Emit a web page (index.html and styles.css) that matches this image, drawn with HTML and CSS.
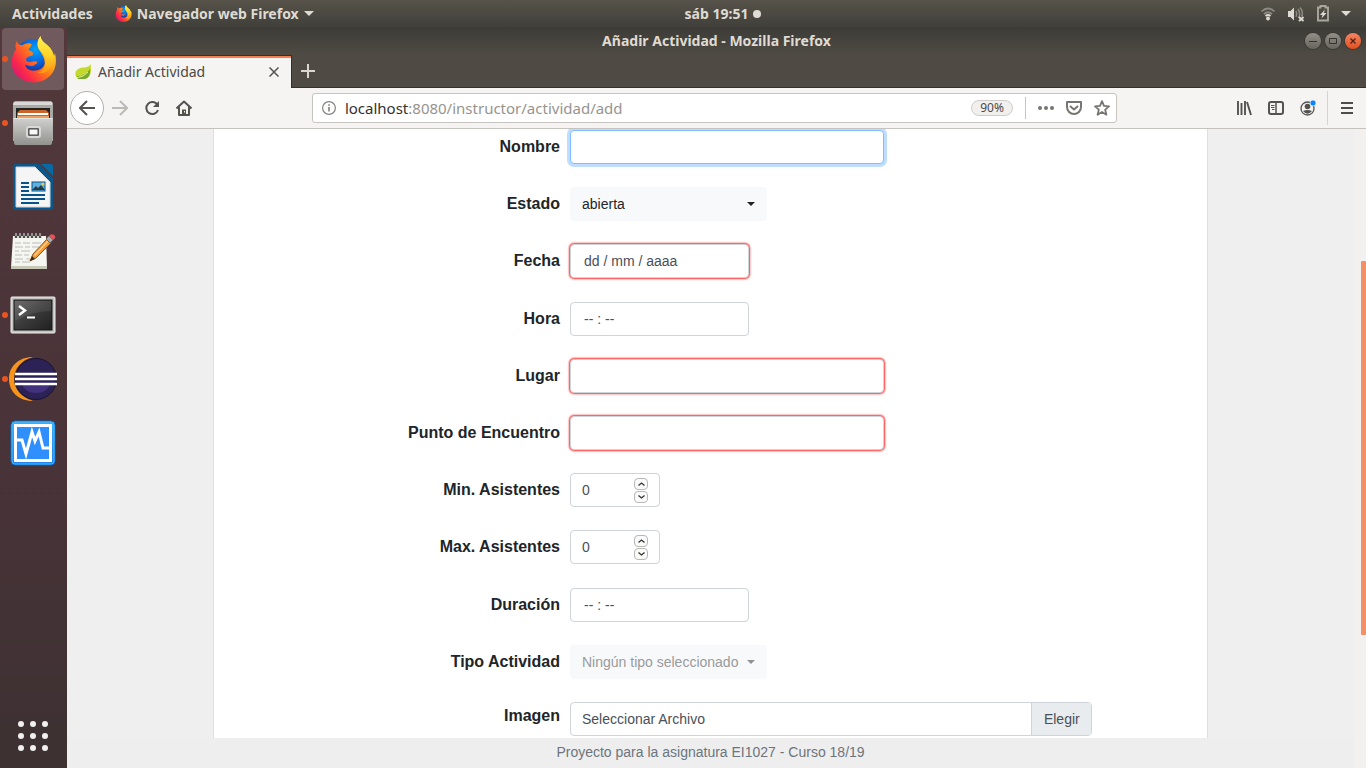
FILE: index.html
```html
<!DOCTYPE html>
<html lang="es">
<head>
<meta charset="utf-8">
<title>Añadir Actividad</title>
<link rel="stylesheet" href="styles.css">
</head>
<body>
<svg class="defs" aria-hidden="true">
  <defs>
    <linearGradient id="fox" x1="0" y1="0.85" x2="0.9" y2="0.1">
      <stop offset="0" stop-color="#d3127c"/><stop offset="0.25" stop-color="#fb2b48"/><stop offset="0.55" stop-color="#ff7a1a"/><stop offset="0.85" stop-color="#ffc81e"/><stop offset="1" stop-color="#fff04a"/>
    </linearGradient>
    <linearGradient id="flame" x1="0.4" y1="0" x2="0.4" y2="1">
      <stop offset="0" stop-color="#fff352"/><stop offset="0.5" stop-color="#ffd52a"/><stop offset="1" stop-color="#ff9412"/>
    </linearGradient>
    <radialGradient id="globe" cx="0.55" cy="0.3" r="0.65">
      <stop offset="0" stop-color="#00a5fb"/><stop offset="0.55" stop-color="#0a62dc"/><stop offset="1" stop-color="#25207c"/>
    </radialGradient>
    <linearGradient id="metal" x1="0" y1="0" x2="0" y2="1">
      <stop offset="0" stop-color="#d0d0ce"/><stop offset="1" stop-color="#92928f"/>
    </linearGradient>
    <linearGradient id="screen" x1="0" y1="0" x2="1" y2="1">
      <stop offset="0" stop-color="#626262"/><stop offset="0.5" stop-color="#3a3a3a"/><stop offset="1" stop-color="#202020"/>
    </linearGradient>
    <linearGradient id="blue" x1="0" y1="0" x2="0" y2="1">
      <stop offset="0" stop-color="#35b1f8"/><stop offset="1" stop-color="#1e83ee"/>
    </linearGradient>
    <symbol id="firefox" viewBox="0 0 44 46">
      <circle cx="22" cy="21" r="18" fill="url(#globe)"/>
      <path fill="url(#fox)" d="M6 5C4 8 4 11 5 13C-1 21-1 33 6 39C14 47 29 48 37 40C44 34 45 25 43 17L42 20C41 13 36 9 32 6C29 4 29 2 29 0C25 5 26 10 28 14C31 19 33 22 33 27C32 32 27 34 22 34C17 34 14 31 14 28C16 29 19 30 22 29C24 27 27 27 25 25C23 24 17 27 15 24C14 21 17 20 21 19C22 17 22 15 17 14C17 12 21 10 20 8C17 6 13 8 11 9C8 9 6 8 6 5Z"/>
      <path fill="url(#flame)" d="M29 0C25 5 25 10 28 14C32 19 35 22 33 29C32 33 29 35 26 36C35 38 41 32 42 20C41 13 36 9 32 6C30 4 29 2 29 0Z"/>
    </symbol>
  </defs>
</svg>

<header class="topbar">
  <div class="topbar-left">
    <button class="top-item">Actividades</button>
    <button class="top-item app-menu">
      <svg width="17" height="17"><use href="#firefox"/></svg>
      <span>Navegador web Firefox</span>
      <svg width="10" height="6" viewBox="0 0 10 6"><path d="M0 0h10L5 5z" fill="#dfdbd2"/></svg>
    </button>
  </div>
  <button class="top-item clock"><span>sáb 19:51</span><i class="clock-dot"></i></button>
  <div class="indicators">
    <svg width="16" height="16" viewBox="0 0 16 16" fill="none"><path d="M1.500 5.500Q8-.500 14.500 5.500M4 8q4-3.500 8 0" stroke="#8d8a84" stroke-width="1.700"/><path d="M5.500 10q2.500-2 5 0" stroke="#dfdbd2" stroke-width="1.700"/><circle cx="8" cy="12.500" r="1.900" fill="#dfdbd2"/></svg>
    <svg width="18" height="16" viewBox="0 0 18 16" fill="none"><path d="M1 5h2.500L7 1.500v13L3.500 11H1z" fill="#dfdbd2"/><path d="M9 5q1.500 3 0 6M11 3q3 5 .5 9M13 1.500q4 5 1.500 9" stroke="#8d8a84" stroke-width="1.500"/><path d="m12 11 4.500 4m0-4L12 15" stroke="#dfdbd2" stroke-width="1.800"/></svg>
    <svg width="14" height="17" viewBox="0 0 14 17"><path d="M4.500 2.500V1h5v1.500H12V15.500H2V2.500z" fill="none" stroke="#aaa79f" stroke-width="1.900"/><path d="M9 4.500 4 10h2.500L5.500 13.500 10.500 8H7.800z" fill="#dfdbd2"/></svg>
    <svg width="10" height="6" viewBox="0 0 10 6"><path d="M0 0h10L5 5z" fill="#dfdbd2"/></svg>
  </div>
</header>

<div class="desktop">
  <nav class="dock" aria-label="Aplicaciones">
    <button class="dock-item active running" aria-label="Firefox">
      <svg width="45" height="47"><use href="#firefox"/></svg>
    </button>
    <button class="dock-item running" aria-label="Archivos">
      <svg width="44" height="46" viewBox="0 0 44 46">
        <path d="M2 3 4 1h36l2 2v38H2z" fill="#a9a9a6"/><path d="M3 2h38v3H2z" fill="#d9d9d7"/>
        <path d="M5 8h34v14H5z" fill="#252320"/><path d="M6 13 9 10h26l3 3v7H6z" fill="#c9652a"/><path d="M7 13h30v2H7z" fill="#fff"/><path d="M6 16h32v4H6z" fill="#eda15d"/>
        <path d="M2 18h40l-1 25q0 2-2 2H5q-2 0-2-2z" fill="url(#metal)"/><path d="M3 18.500h38" stroke="#e4e4e2"/>
        <rect x="16" y="27" width="13" height="10" rx="2" fill="#777" stroke="#d8d8d6" stroke-width="2"/><rect x="18" y="29" width="9" height="6" fill="#f8f8f8" stroke="#444"/>
      </svg>
    </button>
    <button class="dock-item" aria-label="LibreOffice Writer">
      <svg width="42" height="48" viewBox="0 0 42 48">
        <path d="M3 1h24l14 14v30q0 2-2 2H3q-2 0-2-2V3q0-2 2-2z" fill="#0b568b"/>
        <path d="M4 4h19l15 15v25H4z" fill="#f5f5f5" stroke="#cfd3d6"/>
        <path d="M29 1h10q2 0 2 2v10z" fill="#0869a3"/>
        <path d="M9 20h8M9 24h8M9 28h8M9 32h24M9 36h24M9 40h18" stroke="#08548a" stroke-width="2"/>
        <rect x="20" y="19" width="13" height="9" fill="#5eb1e1" stroke="#08548a"/><path d="m20 27 4-4 2 2 3-3 4 5z" fill="#263b40"/><circle cx="31" cy="21" r="1.500" fill="#efc84a"/>
      </svg>
    </button>
    <button class="dock-item" aria-label="Editor de textos">
      <svg width="46" height="40" viewBox="0 0 46 40">
        <path d="M3 5h33l1 32H1z" fill="#f6f6f1"/><path d="M1 35h36v3H1z" fill="#c7c8b5"/>
        <path d="M5 12h6m2 0h7m2 0h9M5 16h8m2 0h5m2 0h7M5 20h4m2 0h9M5 24h7m2 0h5M5 28h8m3 0h4M5 31h5m2 0h8" stroke="#bbb"/>
        <path d="M6 3v4m4-4v4m4-4v4m4-4v4m4-4v4m4-4v4m4-4v4" stroke="#4c4c4c" stroke-width="2.400"/><path d="M6 2v3m4-3v3m4-3v3m4-3v3m4-3v3m4-3v3m4-3v3" stroke="#ddd"/>
        <path d="m20 30 3-7L37 8l4 4-15 15z" fill="#f49a36" stroke="#94551c"/><path d="m24 24 14-15 1 1-14 15z" fill="#ffd08b"/><path d="m20 30 2-5 3 3z" fill="#3a2c20"/>
        <path d="m36 8 3-3 4 4-3 3z" fill="#aaa" stroke="#666"/><path d="m39 5 1-1q3-2 5 1 1 2-2 4z" fill="#e1545b"/>
      </svg>
    </button>
    <button class="dock-item running" aria-label="Terminal">
      <svg width="46" height="38" viewBox="0 0 46 38">
        <rect x="1" y="1" width="44" height="36" rx="1" fill="#c4c4c4" stroke="#eee"/><rect x="4" y="4" width="38" height="30" fill="url(#screen)" stroke="#161616"/>
        <path d="M5 5h36v10Q22 15 5 25z" fill="#fff" opacity=".08"/>
        <path d="m9 10 6 4.500L9 19" fill="none" stroke="#fff" stroke-width="2.400"/><path d="M17 21.500h8" stroke="#fff" stroke-width="2"/>
      </svg>
    </button>
    <button class="dock-item running" aria-label="Eclipse">
      <svg width="48" height="44" viewBox="0 0 48 44">
        <path d="M24 0C10 0 0 9 0 22s10 22 24 22C12 40 5 32 5 22S12 3 24 0z" fill="#f7941e"/>
        <circle cx="27" cy="22" r="20.500" fill="#2c2255" stroke="#171335"/><path d="M12 26q4 10 15 10t15-10z" fill="#42317d"/>
        <path d="M6 17h42M6 22h42M6 27h42" stroke="#fff" stroke-width="2.300"/>
      </svg>
    </button>
    <button class="dock-item" aria-label="Monitor del sistema">
      <svg width="46" height="46" viewBox="0 0 46 46">
        <rect x="1" y="1" width="44" height="44" rx="4" fill="url(#blue)" stroke="#0962b7"/><rect x="2" y="2" width="42" height="42" rx="3" fill="none" stroke="#49b8ff"/>
        <rect x="5.500" y="5.500" width="35" height="35" fill="#308fff" stroke="#fff" stroke-width="3"/>
        <path d="M7 20h5l4 14 6-22 3 9 4-9 4 16h6" fill="none" stroke="#fff" stroke-width="3"/>
      </svg>
    </button>
    <button class="dock-item show-apps" aria-label="Mostrar aplicaciones">
      <svg width="30" height="30" viewBox="0 0 30 30" fill="#f2f1f0"><circle cx="3" cy="3" r="3"/><circle cx="15" cy="3" r="3"/><circle cx="27" cy="3" r="3"/><circle cx="3" cy="15" r="3"/><circle cx="15" cy="15" r="3"/><circle cx="27" cy="15" r="3"/><circle cx="3" cy="27" r="3"/><circle cx="15" cy="27" r="3"/><circle cx="27" cy="27" r="3"/></svg>
    </button>
  </nav>

  <main class="window">
    <div class="titlebar">
      <span class="window-title">Añadir Actividad - Mozilla Firefox</span>
      <div class="window-buttons">
        <button aria-label="Minimizar"><svg width="16" height="16" viewBox="0 0 16 16"><path d="M4 8.500h8" stroke="#35332f"/></svg></button>
        <button aria-label="Maximizar"><svg width="16" height="16" viewBox="0 0 16 16"><path d="M4.500 5.500h7v5h-7z" fill="none" stroke="#35332f"/></svg></button>
        <button class="close" aria-label="Cerrar"><svg width="16" height="16" viewBox="0 0 16 16"><path d="m5.500 5.500 5 5m0-5-5 5" stroke="#4c2317" stroke-width="1.300"/></svg></button>
      </div>
    </div>

    <div class="tabstrip">
      <div class="tab">
        <svg width="17" height="16" viewBox="0 0 17 16"><path d="M15.500 0Q18 14 9 15H3Q-1 12 1 7 4 3 10 3.500 14 3 15.500 0z" fill="#c4d92e"/><path d="M2 12q7 1 13-7 1 8-5 10H3z" fill="#76aa2a"/><path d="M1 14q8-1 12-6" stroke="#e9ef9f" fill="none"/></svg>
        <span>Añadir Actividad</span>
        <button class="plain" aria-label="Cerrar pestaña"><svg width="10" height="10" viewBox="0 0 10 10"><path d="m.5.5 9 9m0-9-9 9" stroke="#55534f" stroke-width="1.500"/></svg></button>
      </div>
      <button class="plain new-tab" aria-label="Nueva pestaña"><svg width="14" height="14" viewBox="0 0 14 14"><path d="M7 0v14M0 7h14" stroke="#dad7d0" stroke-width="2"/></svg></button>
    </div>

    <div class="toolbar">
      <div class="tools">
        <button class="tool back" aria-label="Atrás"><svg width="16" height="16" viewBox="0 0 16 16"><path d="M8 1 1 8l7 7M1 8h15" fill="none" stroke="#55534f" stroke-width="2"/></svg></button>
        <button class="tool" aria-label="Adelante" disabled><svg width="16" height="16" viewBox="0 0 16 16"><path d="m8 1 7 7-7 7m7-7H0" fill="none" stroke="#bcbab7" stroke-width="2"/></svg></button>
        <button class="tool" aria-label="Recargar"><svg width="16" height="16" viewBox="0 0 16 16"><path d="M13.500 5A6 6 0 1 0 14 10" fill="none" stroke="#555350" stroke-width="2"/><path d="M15 1v6H9z" fill="#555350"/></svg></button>
        <button class="tool" aria-label="Inicio"><svg width="16" height="16" viewBox="0 0 16 16"><path d="m.5 8.500 7.500-7 7.500 7M3 7v8h10V7" fill="none" stroke="#555350" stroke-width="2" stroke-linejoin="round"/><path d="M6 9.500h4V15H6z" fill="#555350"/><path d="M8.500 11v1.500" stroke="#fff"/></svg></button>
      </div>
      <div class="urlbar">
        <svg width="14" height="14" viewBox="0 0 14 14"><circle cx="7" cy="7" r="6.400" fill="none" stroke="#85837f" stroke-width="1.200"/><path d="M7 6v4.500M7 3.200v1.600" stroke="#777571" stroke-width="1.500"/></svg>
        <a class="url" href="#"><b>localhost</b>:8080/instructor/actividad/add</a>
        <button class="zoom">90%</button>
        <i class="divider"></i>
        <button class="plain" aria-label="Acciones"><svg width="16" height="16" viewBox="0 0 16 16" fill="#777571"><circle cx="2" cy="8" r="2"/><circle cx="8" cy="8" r="2"/><circle cx="14" cy="8" r="2"/></svg></button>
        <button class="plain" aria-label="Pocket"><svg width="16" height="16" viewBox="0 0 16 16" fill="none" stroke="#777571" stroke-width="2" stroke-linejoin="round" stroke-linecap="round"><path d="M1 2h14v5a7 7 0 0 1-14 0z"/><path d="m4.500 6.500 3.500 3 3.500-3"/></svg></button>
        <button class="plain" aria-label="Marcador"><svg width="16" height="16" viewBox="0 0 16 16"><path d="m8 1.200 2 4.600 5 .5-3.800 3.400 1.200 5L8 12l-4.400 2.700 1.200-5L1 6.300l5-.5z" fill="none" stroke="#777571" stroke-width="1.800" stroke-linejoin="round"/></svg></button>
      </div>
      <div class="tools">
        <button class="tool" aria-label="Catálogo"><svg width="16" height="16" viewBox="0 0 16 16"><path d="M2 1v14M5.500 3v12M9 1v14m2-13 4 13" stroke="#555350" stroke-width="1.900"/></svg></button>
        <button class="tool" aria-label="Barra lateral"><svg width="16" height="16" viewBox="0 0 16 16"><rect x="1" y="2" width="14" height="12" rx="2" fill="none" stroke="#555350" stroke-width="2"/><path d="M8 2v12" stroke="#555350" stroke-width="1.500"/><path d="M3 5.500h3.500M3 7.500h3.500M4 9.500h2.500" stroke="#555350"/></svg></button>
        <button class="tool" aria-label="Cuenta"><svg width="16" height="16" viewBox="0 0 16 16"><circle cx="7.500" cy="8.500" r="6.500" fill="none" stroke="#555350" stroke-width="1.300"/><circle cx="7.500" cy="6.500" r="2.800" fill="#555350"/><path d="M3 11q4.500-2 9 0-4.500 5.500-9 0z" fill="#555350"/><circle cx="13" cy="3" r="3" fill="#0a84ff" stroke="#f4f3f1" stroke-width=".7"/></svg></button>
        <i class="separator"></i>
        <button class="tool menu" aria-label="Menú"><svg width="12" height="14" viewBox="0 0 12 14"><path d="M0 2h12M0 7h12M0 12h12" stroke="#4e4d4a" stroke-width="2"/></svg></button>
      </div>
    </div>

    <div class="viewport">
      <div class="page">
        <div class="page-body">
          <form class="card">
            <div class="row"><label for="nombre">Nombre</label><input class="control wide focused" id="nombre" type="text"></div>
            <div class="row"><label for="estado">Estado</label><span class="picker"><select id="estado"><option>abierta</option></select></span></div>
            <div class="row"><label for="fecha">Fecha</label><input class="control medium invalid" id="fecha" type="text" value="dd / mm / aaaa"></div>
            <div class="row"><label for="hora">Hora</label><input class="control medium" id="hora" type="text" value="-- : --"></div>
            <div class="row"><label for="lugar">Lugar</label><input class="control wide invalid" id="lugar" type="text"></div>
            <div class="row"><label for="punto">Punto de Encuentro</label><input class="control wide invalid" id="punto" type="text"></div>
            <div class="row"><label for="min">Min. Asistentes</label><span class="control stepper"><input id="min" type="number" value="0"><span class="steps"><button type="button" aria-label="Aumentar"><svg width="7" height="4" viewBox="0 0 7 4"><path d="m.5 3.500 3-2.500 3 2.500"/></svg></button><button type="button" aria-label="Reducir"><svg width="7" height="4" viewBox="0 0 7 4"><path d="m.5.500 3 2.500 3-2.500"/></svg></button></span></span></div>
            <div class="row"><label for="max">Max. Asistentes</label><span class="control stepper"><input id="max" type="number" value="0"><span class="steps"><button type="button" aria-label="Aumentar"><svg width="7" height="4" viewBox="0 0 7 4"><path d="m.5 3.500 3-2.500 3 2.500"/></svg></button><button type="button" aria-label="Reducir"><svg width="7" height="4" viewBox="0 0 7 4"><path d="m.5.500 3 2.500 3-2.500"/></svg></button></span></span></div>
            <div class="row"><label for="duracion">Duración</label><input class="control medium" id="duracion" type="text" value="-- : --"></div>
            <div class="row"><label for="tipo">Tipo Actividad</label><span class="picker disabled"><select id="tipo" disabled><option>Ningún tipo seleccionado</option></select></span></div>
            <div class="row last"><label for="imagen">Imagen</label><span class="file"><input id="imagen" type="text" value="Seleccionar Archivo" readonly><button type="button">Elegir</button></span></div>
          </form>
        </div>
        <footer class="footer">Proyecto para la asignatura EI1027 - Curso 18/19</footer>
      </div>
      <div class="scrollbar"><i class="thumb"></i></div>
    </div>
  </main>
</div>
</body>
</html>
```

FILE: styles.css
```css
* { box-sizing: border-box; }

body {
  margin: 0;
  height: 100vh;
  display: flex;
  flex-direction: column;
  overflow: hidden;
  font-family: "Liberation Sans", Arial, sans-serif;
  font-size: 14px;
  color: #212529;
}

button, input, select {
  font: inherit;
  color: inherit;
  margin: 0;
  padding: 0;
  border: 0;
  background: none;
}

svg { display: block; flex: none; }
.defs { position: absolute; width: 0; height: 0; }
.plain { display: flex; }

/* System bar */
.topbar {
  flex: none;
  height: 27px;
  display: grid;
  grid-template-columns: 685fr auto 605fr;
  align-items: center;
  background: linear-gradient(#57534a, #403f3a);
  color: #dfdbd2;
  font: 700 14px/20px "Noto Sans", "Open Sans", sans-serif;
}
.topbar-left { display: flex; gap: 22px; padding-left: 12px; }
.top-item { display: flex; align-items: center; gap: 5px; white-space: nowrap; }
.clock-dot { width: 8px; height: 8px; border-radius: 50%; background: #dfdbd2; }
.indicators {
  display: flex;
  justify-content: flex-end;
  align-items: center;
  gap: 11px;
  padding-right: 15px;
}

/* Dock */
.desktop { flex: 1; min-height: 0; display: flex; }
.dock {
  flex: none;
  width: 67px;
  display: flex;
  flex-direction: column;
  gap: 2px;
  padding: 1px 3px 1px 2px;
  background: linear-gradient(#52383b, #483338 60%, #3d3132);
}
.dock-item {
  position: relative;
  height: 62px;
  display: flex;
  align-items: center;
  justify-content: center;
  border-radius: 4px;
}
.dock-item.active { background: #715a5d; }
.dock-item.running::before {
  content: "";
  position: absolute;
  left: 0;
  top: 28px;
  width: 6px;
  height: 6px;
  border-radius: 50%;
  background: #e95420;
}
.show-apps { margin-top: auto; }

/* Window frame */
.window { flex: 1; min-width: 0; display: flex; flex-direction: column; background: #4f4b44; }
.titlebar {
  flex: none;
  height: 28px;
  display: grid;
  grid-template-columns: 1fr auto 1fr;
  align-items: center;
  background: linear-gradient(#3c3b37, #4f4b44);
  color: #dfdbd2;
  font: 700 14px/20px "Noto Sans", "Open Sans", sans-serif;
}
.window-title { grid-column: 2; }
.window-buttons { display: flex; justify-content: flex-end; gap: 4px; padding-right: 5px; }
.window-buttons button {
  border-radius: 50%;
  background: linear-gradient(#918f88, #67655e);
  box-shadow: 0 0 0 1px #3b3935;
}
.window-buttons .close { background: linear-gradient(#f58562, #e2501f); }

.tabstrip {
  flex: none;
  height: 33px;
  display: flex;
  align-items: center;
  border-bottom: 1px solid #33312d;
  font: 14px/20px "Noto Sans", "Open Sans", sans-serif;
}
.tab {
  width: 225px;
  height: 33px;
  margin-bottom: -1px;
  display: flex;
  align-items: center;
  gap: 6px;
  padding: 0 12px 0 8px;
  border-top: 1px solid #33312d;
  border-right: 1px solid #33312d;
  background: #f5f4f2;
  box-shadow: inset 0 2px #f27e52;
  color: #4c4a46;
}
.tab span { flex: 1; }
.new-tab { padding: 0 9px; }

.toolbar {
  flex: none;
  height: 41px;
  display: grid;
  grid-template-columns: auto 112fr 806fr 111fr auto;
  align-items: center;
  padding: 0 3px;
  background: #f5f4f2;
  border-bottom: 1px solid #c6c3bf;
}
.tools { display: flex; align-items: center; }
.tool {
  width: 32px;
  height: 34px;
  display: flex;
  align-items: center;
  justify-content: center;
}
.tool.back { width: 34px; border: 1px solid #b3b0ac; border-radius: 50%; background: #fff; }
.separator { width: 1px; height: 34px; margin: 0 3px; background: #d6d4d1; }
.urlbar {
  grid-column: 3;
  height: 30px;
  display: flex;
  align-items: center;
  gap: 12px;
  padding: 0 6px 0 9px;
  border: 1px solid #c8c5c1;
  border-radius: 3px;
  background: #fff;
}
.urlbar + .tools { grid-column: 5; }
.url {
  flex: 1;
  margin-left: -3px;
  color: #96948f;
  font: 15px/20px "Noto Sans", "Open Sans", sans-serif;
  text-decoration: none;
}
.url b { font-weight: 400; color: #33322f; }
.zoom {
  width: 42px;
  height: 16px;
  border: 1px solid #cfcdca;
  border-radius: 8px;
  background: #f1f0ee;
  color: #4c4a46;
  font: 12px/14px "Noto Sans", "Open Sans", sans-serif;
}
.divider { width: 1px; height: 22px; background: #c8c5c1; }

/* Web page */
.viewport { flex: 1; min-height: 0; display: flex; background: #f2f1f0; }
.page { flex: 1; min-width: 0; display: flex; flex-direction: column; background: #efefef; }
.page-body { flex: 1; min-height: 0; overflow: hidden; }
.card {
  max-width: 995px;
  height: 100%;
  margin: 0 auto;
  padding-top: 1px;
  display: flex;
  flex-direction: column;
  border: solid #dfdfdf;
  border-width: 0 1px;
  background: #fff;
}
.row {
  flex: 1 0 auto;
  display: grid;
  grid-template-columns: 346fr 637fr;
  gap: 10px;
  align-items: start;
}
.row.last { flex: none; height: 36px; }
.row label { font-size: 16px; line-height: 34px; font-weight: 700; text-align: right; }
.row.last label { line-height: 28px; }

.control {
  height: 34px;
  padding: 0 11px;
  border: 1px solid #ced4da;
  border-radius: 4px;
  background: #fff;
  color: #495057;
}
.wide { width: 314px; }
.medium { width: 179px; padding: 0 13px; }
.focused { border-color: #80bdff; box-shadow: 0 0 0 3px #bfdeff; }
.invalid { box-shadow: 0 0 2px 1px #ff3030; }

.picker {
  position: relative;
  width: 197px;
  height: 34px;
  border-radius: 4px;
  background: #f8f9fa;
}
.picker select { width: 100%; height: 34px; padding: 0 12px; appearance: none; opacity: 1; }
.picker::after {
  content: "";
  position: absolute;
  right: 12px;
  top: 15px;
  border: solid transparent;
  border-width: 4px 4px 0;
  border-top-color: #212529;
}
.picker.disabled { color: #999b9d; }
.picker.disabled::after { border-top-color: #8f9193; }

.stepper { width: 90px; display: flex; align-items: center; }
.stepper input { flex: 1; min-width: 0; appearance: textfield; }
.stepper input::-webkit-inner-spin-button { appearance: none; }
.steps { display: flex; flex-direction: column; gap: 1px; }
.steps button {
  width: 14px;
  height: 12px;
  display: flex;
  align-items: center;
  justify-content: center;
  border: 1px solid #b9b8b6;
  border-radius: 4px;
  background: #fafafa;
}
.steps path { fill: none; stroke: #333; stroke-width: 1.3; }

.file {
  width: 82%;
  height: 34px;
  display: flex;
  border: 1px solid #ced4da;
  border-radius: 4px;
  color: #495057;
}
.file input { flex: 1; min-width: 0; padding: 0 11px; }
.file button { width: 60px; border-left: 1px solid #ced4da; background: #e9ecef; }

.footer {
  flex: none;
  height: 30px;
  line-height: 28px;
  text-align: center;
  background: #eee;
  color: #6c757d;
}

.scrollbar { flex: none; width: 12px; display: flex; flex-direction: column; align-items: flex-end; }
.scrollbar::before { content: ""; flex: 132; }
.scrollbar::after { content: ""; flex: 133; }
.thumb { flex: 374; width: 5px; border-radius: 1px; background: #f38f66; }
```
